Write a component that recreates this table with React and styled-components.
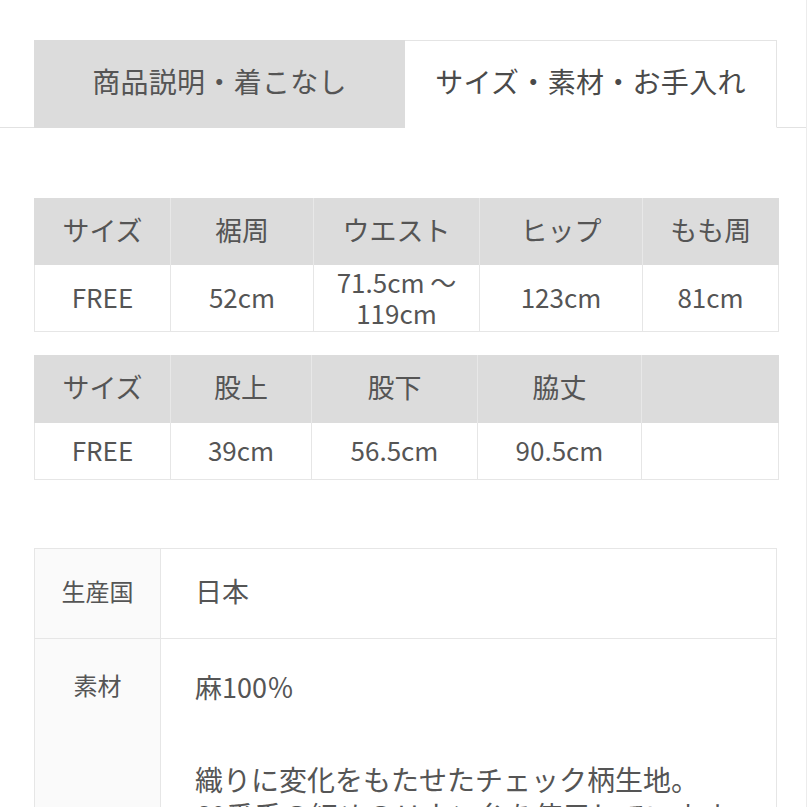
import styled, { createGlobalStyle } from "styled-components";

const GlobalStyle = createGlobalStyle`
	html, body {
		margin: 0;
		padding: 0;
		background: #fff;
	}
	body {
		font-family: "Noto Sans CJK JP", "Noto Sans", sans-serif;
		color: #555;
	}
`;

const sizeTables = [
	{
		cols: [136, 143, 166, 163, 136],
		heads: ["サイズ", "裾周", "ウエスト", "ヒップ", "もも周"],
		values: ["FREE", "52cm", "71.5cm ～\n119cm", "123cm", "81cm"],
		headHeight: 67,
		rowHeight: 67,
	},
	{
		cols: [136, 141, 166, 164, 137],
		heads: ["サイズ", "股上", "股下", "脇丈", ""],
		values: ["FREE", "39cm", "56.5cm", "90.5cm", ""],
		headHeight: 68,
		rowHeight: 57,
	},
];

function App() {
	return (
		<Page>
			<GlobalStyle />
			<TabBar>
				<Tab>商品説明・着こなし</Tab>
				<Tab active>サイズ・素材・お手入れ</Tab>
			</TabBar>

			<Content>
				{sizeTables.map((t, i) => (
					<SizeTable key={i}>
						<colgroup>
							{t.cols.map((w, j) => (
								<col key={j} style={{ width: w }} />
							))}
						</colgroup>
						<tbody>
							<tr>
								{t.heads.map((h, j) => (
									<HeadCell key={j} height={t.headHeight}>
										{h}
									</HeadCell>
								))}
							</tr>
							<tr>
								{t.values.map((v, j) => (
									<Cell key={j} height={t.rowHeight}>
										{v}
									</Cell>
								))}
							</tr>
						</tbody>
					</SizeTable>
				))}

				<InfoTable>
					<InfoRow>
						<Label center>生産国</Label>
						<Value center>日本</Value>
					</InfoRow>
					<InfoRow>
						<Label>素材</Label>
						<Value>
							<Para>麻100％</Para>
							<Description>
								織りに変化をもたせたチェック柄生地。
								<br />
								60番手の細めのリネン糸を使用しています。
							</Description>
						</Value>
					</InfoRow>
				</InfoTable>
			</Content>
		</Page>
	);
}

export default App;

const Page = styled.div`
	width: 807px;
	height: 807px;
	box-sizing: border-box;
	padding-top: 40px;
	border-right: 1px solid #ececec;
	overflow: hidden;
`;

const TabBar = styled.div`
	display: flex;
	padding: 0 29px 0 34px;
	border-bottom: 1px solid #e2e2e2;
`;

const Tab = styled.div`
	flex: 1;
	height: 88px;
	display: flex;
	align-items: center;
	justify-content: center;
	box-sizing: border-box;
	font-size: 28px;
	letter-spacing: 0.3px;
	color: ${(p) => (p.active ? "#4a4a4a" : "#555")};
	background: ${(p) => (p.active ? "#fff" : "#dcdcdc")};
	border-top: 1px solid ${(p) => (p.active ? "#e4e4e4" : "#dcdcdc")};
	border-right: ${(p) => (p.active ? "1px solid #e4e4e4" : "none")};
	margin-bottom: -1px;
	padding-bottom: 6px;
	border-bottom: 1px solid ${(p) => (p.active ? "#fff" : "#dcdcdc")};
`;

const Content = styled.div`
	display: flex;
	flex-direction: column;
	padding: 70px 29px 0 34px;
`;

const SizeTable = styled.table`
	width: 744px;
	table-layout: fixed;
	border-collapse: collapse;
	margin-bottom: 23px;
	&:last-of-type {
		margin-bottom: 68px;
	}
`;

const HeadCell = styled.td`
	height: ${(p) => p.height - 5}px;
	padding: 0 0 5px;
	background: #dcdcdc;
	border-left: 1px solid #e8e8e8;
	text-align: center;
	font-size: 27px;
	color: #555;
	&:first-child {
		border-left-color: #dcdcdc;
	}
`;

const Cell = styled.td`
	height: ${(p) => p.height - 4}px;
	padding: 0 0 3px;
	border: 1px solid #e6e6e6;
	border-top: none;
	text-align: center;
	font-size: 26px;
	line-height: 31px;
	color: #555;
	white-space: pre-line;
`;

const InfoTable = styled.div`
	display: flex;
	flex-direction: column;
	border: 1px solid #e6e6e6;
	border-bottom: none;
`;

const InfoRow = styled.div`
	display: grid;
	grid-template-columns: 126px 1fr;
	border-bottom: 1px solid #e6e6e6;
	&:first-child {
		height: 89px;
	}
`;

const Label = styled.div`
	background: #fafafa;
	border-right: 1px solid #e6e6e6;
	display: flex;
	justify-content: center;
	align-items: ${(p) => (p.center ? "center" : "flex-start")};
	padding: ${(p) => (p.center ? "0 0 6px" : "28px 0 0")};
	font-size: 24px;
	color: #555;
`;

const Value = styled.div`
	display: flex;
	flex-direction: column;
	justify-content: ${(p) => (p.center ? "center" : "flex-start")};
	padding: ${(p) => (p.center ? "0 0 6px 34px" : "28px 0 0 34px")};
	font-size: 27px;
	color: #555;
`;

const Para = styled.p`
	margin: 0;
	line-height: 40px;
`;

const Description = styled.p`
	margin: 54px 0 0;
	font-size: 28px;
	line-height: 36px;
	white-space: nowrap;
`;
